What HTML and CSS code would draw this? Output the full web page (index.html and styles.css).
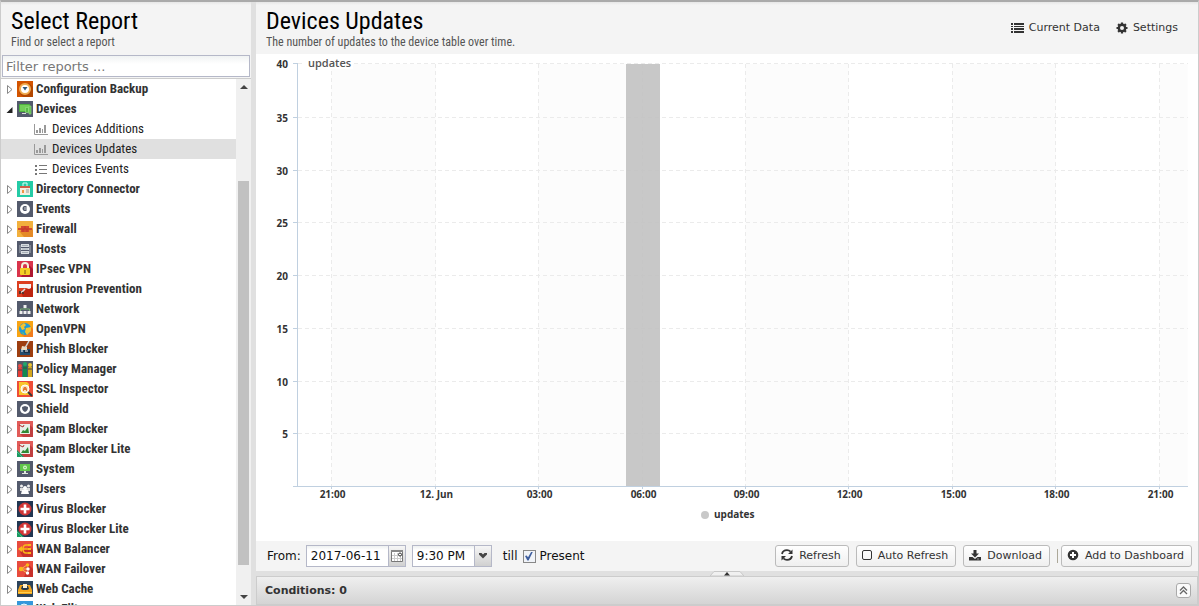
FILE: index.html
```html
<!DOCTYPE html>
<html lang="en">
<head>
<meta charset="utf-8">
<title>Reports</title>
<link rel="stylesheet" href="styles.css">
</head>
<body>
<div class="app">
  <aside class="sidebar">
    <header class="panel-head">
      <div><h1>Select Report</h1><p>Find or select a report</p></div>
    </header>
    <div class="filter"><input type="text" placeholder="Filter reports ..." aria-label="Filter reports"></div>
    <div class="tree-wrap">
      <ul class="tree" id="tree"></ul>
      <div class="scrollbar">
        <svg class="arrow" viewBox="0 0 8 4"><path d="M0 4L4 0L8 4z"/></svg>
        <div class="track"><div class="thumb"></div></div>
        <svg class="arrow" viewBox="0 0 8 4"><path d="M0 0L4 4L8 0z"/></svg>
      </div>
    </div>
  </aside>
  <div class="splitter"></div>
  <main class="main">
    <header class="panel-head">
      <div><h1>Devices Updates</h1><p>The number of updates to the device table over time.</p></div>
      <nav class="actions">
        <button type="button"><svg width="13" height="10" viewBox="0 0 13 10"><path d="M0 0h2v2H0zM3 0h10v2H3zM0 3h2v1H0zM3 3h10v1H3zM0 5h2v2H0zM3 5h10v2H3zM0 8h2v2H0zM3 8h10v2H3z"/></svg>Current Data</button>
        <button type="button"><svg width="12" height="12" viewBox="0 0 12 12"><circle cx="6" cy="6" r="3.200" fill="none" stroke="#333" stroke-width="2.400"/><path d="M6 .5v2M6 9.500v2M.5 6h2M9.500 6h2M2.100 2.100l1.400 1.400M8.500 8.500l1.400 1.400M9.900 2.100L8.500 3.500M3.500 8.500L2.100 9.900" stroke="#333" stroke-width="2.200"/></svg>Settings</button>
      </nav>
    </header>
    <svg class="chart" id="chart" viewBox="256 54 942 487" role="img" aria-label="Updates over time"></svg>
    <form class="toolbar">
      <label for="date">From:</label>
      <span class="field date"><input id="date" type="text" value="2017-06-11"><button type="button" aria-label="Pick date"><svg width="14" height="14" viewBox="0 0 14 14"><path d="M1.500 2.500h11v10h-11z" fill="#fff" stroke="#777"/><path d="M1 1h12v2H1z" fill="#888"/><path d="M4.500 4v8M7.500 4v8M10.500 4v8M2 6.500h10M2 9.500h10" stroke="#ccc" fill="none"/><circle cx="10" cy="5.500" r="1.500" fill="#fff" stroke="#333"/></svg></button></span>
      <span class="field time"><select aria-label="Start time"><option>9:30 PM</option></select><span class="trigger"><svg width="10" height="6" viewBox="0 0 10 6"><path d="M1 0h2.500L5 1.500 6.500 0H9v1.500L5 5.500 1 1.500z" fill="#444"/></svg></span></span>
      <span class="till">till</span>
      <label class="present"><input type="checkbox" checked>Present</label>
      <span class="buttons">
        <button type="button" class="btn"><svg width="12" height="12" viewBox="0 0 12 12"><path d="M1 5C1.500 2.500 3.500 1.200 6 1.200c1.500 0 2.600.5 3.600 1.400M11 7c-.5 2.500-2.500 3.800-5 3.800-1.500 0-2.600-.5-3.600-1.400" fill="none" stroke="#333" stroke-width="1.800"/><path d="M11.500.5V5H7zM.5 11.500V7H5z"/></svg>Refresh</button>
        <button type="button" class="btn"><svg width="10" height="10" viewBox="0 0 10 10"><rect x=".5" y=".5" width="9" height="9" rx="1.500" fill="none" stroke="#333"/></svg>Auto Refresh</button>
        <button type="button" class="btn"><svg width="12" height="12" viewBox="0 0 12 12"><path fill-rule="evenodd" d="M4.500 1h3v3.500H10L6 8.500 2 4.500h2.500zM0 8h3.500L6 10l2.500-2H12v3.500H0zM8.500 9.500v1h1v-1z"/></svg>Download</button>
        <span class="sep"></span>
        <button type="button" class="btn"><svg width="12" height="12" viewBox="0 0 12 12"><circle cx="6" cy="6" r="5.300"/><path d="M6 3v6M3 6h6" stroke="#fff" stroke-width="2"/></svg>Add to Dashboard</button>
      </span>
    </form>
    <div class="hsplit"><svg width="34" height="5" viewBox="0 0 34 5"><path d="M0 5L4 .5h26L34 5z" fill="#f0f0f0" stroke="#c8c8c8"/><path d="M14 4.500L17 1l3 3.500z" fill="#333"/></svg></div>
    <section class="conditions"><h2>Conditions: 0</h2>
      <button type="button" aria-label="Expand"><svg width="9" height="9" viewBox="0 0 9 9"><path d="M1 4.500L4.500 1 8 4.500M1 8l3.500-3.500L8 8" fill="none" stroke="#666" stroke-width="1.300"/></svg></button>
    </section>
  </main>
</div>
<script src="app.js"></script>
</body>
</html>
```

FILE: styles.css
```css
* { box-sizing: border-box; }
body { margin: 0; font-family: "DejaVu Sans", sans-serif; font-size: 13px; color: #111; }
button, input, select { font: inherit; color: inherit; margin: 0; }
.app { display: flex; height: 100vh; border: 1px solid #ccc; border-top: 1px solid #aaa; background: #fff; overflow: hidden; }
.sidebar { display: flex; flex-direction: column; width: 250px; flex: none; }
.splitter { width: 5px; flex: none; background: #e0e0e0; border-top: 1px solid #aaa; }
.main { display: flex; flex-direction: column; flex: 1; min-width: 0; }
.panel-head { display: flex; justify-content: space-between; align-items: center; height: 53px; flex: none; padding: 0 10px; background: linear-gradient(#aaa 1px, #e6e6e6 1px, #f4f4f4 4px); font-family: "Roboto Condensed", "Liberation Sans Narrow", Roboto, sans-serif; }
.panel-head h1 { margin: 0; font-size: 24px; line-height: 29px; font-weight: 400; color: #000; white-space: nowrap; }
.panel-head p { margin: 0; font-size: 12px; line-height: 13px; color: #555; white-space: nowrap; }
.actions { display: flex; gap: 16px; padding-right: 10px; }
.actions button { display: flex; align-items: center; gap: 5px; padding: 0; border: 0; background: none; font: 11px "DejaVu Sans", sans-serif; color: #333; }
.actions svg, .btn svg { fill: #333; flex: none; }
.filter { padding: 1px; background: #f4f4f4; border-bottom: 1px solid #ccc; flex: none; }
.filter input { display: block; width: 100%; height: 22px; padding: 0 3px; border: 1px solid #b5b8c8; background: linear-gradient(#f0f3f3, #fff 8px); outline: 0; }
.filter input::placeholder { color: #777; opacity: 1; }
.tree-wrap { display: flex; flex: 1; min-height: 0; }
.tree { flex: 1; margin: 0; padding: 0; list-style: none; overflow: hidden; font: 700 13px/20px "Roboto Condensed", "Liberation Sans Narrow", Roboto, sans-serif; color: #333; }
.tree li { display: flex; align-items: center; height: 20px; padding-left: 5px; white-space: nowrap; }
.tree .twist { width: 7px; height: 9px; margin-right: 4px; }
.tree .app-icon { width: 16px; height: 16px; margin-right: 3px; }
.tree .leaf { padding-left: 33px; font-weight: 400; color: #222; }
.tree .leaf svg { width: 14px; height: 11px; margin-right: 4px; }
.tree .selected { background: #e0e0e0; }
.scrollbar { display: flex; flex-direction: column; align-items: center; width: 15px; padding: 6px 2px; background: #f0f0f0; }
.scrollbar .arrow { width: 8px; height: 4px; fill: #444; }
.track { flex: 1; width: 100%; padding: 92px 0 30px; }
.thumb { height: 100%; background: #c1c1c1; }
.chart { display: block; flex: 1; min-height: 0; width: 100%; font: 700 10px "Open Sans", sans-serif; fill: #333; }
.chart .title { font-size: 11px; font-weight: 600; fill: #555; }
.toolbar { display: flex; align-items: center; height: 30px; flex: none; padding: 0 6px 0 11px; background: #f4f4f4; font-size: 12px; white-space: nowrap; }
.field { display: flex; height: 22px; border: 1px solid #b5b8c8; background: #fff; }
.date { width: 100px; margin-left: 5px; }
.time { position: relative; width: 80px; margin-left: 6px; }
.field input, .field select { flex: 1; min-width: 0; padding: 0 4px; border: 0; outline: 0; appearance: none; background: linear-gradient(#eef1f1, #fff 4px); color: #111; }
.time select { padding-right: 17px; }
.field button, .trigger { display: flex; align-items: center; justify-content: center; width: 17px; flex: none; padding: 0; border: 0; border-left: 1px solid #b5b8c8; background: linear-gradient(#f6f6f6, #d0d0d0); }
.trigger { position: absolute; top: 0; right: 0; bottom: 0; pointer-events: none; }
.till { margin: 0 5px 0 11px; }
.present { display: flex; align-items: center; gap: 4px; }
.present input { appearance: none; width: 13px; height: 13px; border: 1px solid #888; background: #f0f3f8; display: flex; align-items: center; justify-content: center; }
.present input:checked::before { content: ""; width: 8px; height: 9px; background: #3f5f9f; clip-path: polygon(0 50%, 20% 45%, 38% 65%, 80% 0, 100% 0, 45% 100%, 30% 100%); }
.buttons { display: flex; align-items: center; gap: 7px; margin-left: auto; }
.btn { display: flex; align-items: center; gap: 6px; height: 22px; padding: 0 7px 2px 5px; border: 1px solid #bbb; border-radius: 3px; background: linear-gradient(#fff, #efefef); font-size: 11px; color: #333; }
.sep { width: 1px; height: 14px; margin-right: -4px; background: #aca899; }
.hsplit { display: flex; justify-content: center; align-items: end; height: 5px; flex: none; background: #e0e0e0; }
.hsplit svg { display: block; }
.conditions { display: flex; align-items: center; justify-content: space-between; height: 29px; flex: none; padding: 0 6px 0 8px; border: 1px solid #ccc; background: linear-gradient(#efefef, #d4d4d4); }
.conditions h2 { margin: 0; font-size: 11px; line-height: 16px; color: #333; }
.conditions button { display: flex; align-items: center; justify-content: center; width: 15px; height: 15px; padding: 0; border: 1px solid #aaa; border-radius: 3px; background: #fafafa; }
```

FILE: app.js
```js
const box = (color, art) => `<rect width="16" height="16" fill="${color}"/>${art}`;
const slate = '#535a6c';
const ribbon = '<path d="M0 9l7 7H0z" fill="#199a62"/><path d="M0 11l5 5" stroke="#6fd3a4" stroke-dasharray="1 1"/>';
const spam = '<path d="M13 4l3 3v9H6l-3-3z" fill="#c03f3f"/><path d="M3 3h10v10H3z" fill="#e9efe9"/><path d="M4 12l2-3 2 1 3-4 1 6z" fill="#2f8a35"/><path d="M2 4l4 2 1-2" stroke="#a33" fill="none"/>';
const virus = '<circle cx="8" cy="8" r="6.500" fill="#cf3535"/><path d="M8 3.500v9M3.500 8h9" stroke="#fff" stroke-width="2.600"/>';
const icons = {
  backup: box('#d35400', '<path d="M12 2l4 4v10H6l-4-4z" fill="#b34700"/><circle cx="8" cy="8" r="5" fill="#fff" stroke="#f0ad52" stroke-width="2"/><path d="M5.500 6h5L8 9.500z" fill="#31597b"/>'),
  devices: box(slate, '<path d="M2.500 3.500h10v7h-10z" fill="#72cf58" stroke="#4caf3d"/><path d="M5 12h4v1H5z" fill="#ddd"/><path d="M8.500 6.500h3v5h-3zM12 5h2v8h-2z" fill="#58b947" stroke="#9be587" stroke-width=".6"/>'),
  directory: box('#24cba6', '<path d="M3 5h10v9H3z" fill="#f4eddf"/><path d="M3 5h10v2H3z" fill="#cf5f48"/><path d="M6 5V2h4v3" stroke="#d9fff5" fill="none"/><path d="M5 9h2v3H5z" fill="#ef9545"/><path d="M9 9h3M9 11h3" stroke="#999"/>'),
  events: box(slate, '<circle cx="8" cy="8" r="5" fill="#fff"/><path d="M7 5h2.500v5H7C5 9 5 6 7 5z" fill="#535a6c"/><path d="M8 6v3" stroke="#cdd0d6"/>'),
  firewall: box('#f2b03d', '<path d="M15 7l1 2v7H7l-5-6z" fill="#e48a27"/><path d="M1 7h3V5h8v2h3v2h-3v2H4V9H1z" fill="#d34a31"/><path d="M4 8h8M8 5v3M6 8v3M10 8v3" stroke="#b93527" stroke-width=".7"/>'),
  hosts: box(slate, '<path d="M4 3h8v3H4zM4 7h8v2H4zM4 10h8v3H4z" fill="#d8dde0"/><path d="M3 4v8M13 4v8" stroke="#aab0b8"/><path d="M5 4.500h6M5 8h6M5 11.500h6" stroke="#929ba3" stroke-width=".7"/>'),
  ipsec: box('#d9344b', '<path d="M12 4l4 4v8H4z" fill="#ad1730"/><path d="M5 8V5a3 3 0 0 1 6 0v3" stroke="#f4f1dc" stroke-width="2" fill="none"/><rect x="3" y="7" width="10" height="7" rx="1" fill="#f5ce25"/><path d="M8 9v4" stroke="#a67b17" stroke-width="1.500"/>'),
  intrusion: box('#dc3e20', '<path d="M14 5l2 2v9H6l-2-5z" fill="#bd240f"/><path d="M2 3h12v4l-2 1-3-1H2z" fill="#f4f4f4"/><path d="M8 8L5 11H3" stroke="#ddd" stroke-width="1.500" fill="none"/><path d="M2 10h2v3H2zM5 11h2v2H5z" fill="#58332c"/>'),
  network: box(slate, '<path d="M8 5v3M3.500 11V8h9v3" stroke="#76ad72" fill="none"/><path d="M6.500 4h3v3h-3zM2.500 10h3v3h-3zM6.500 10h3v3h-3zM10.500 10h3v3h-3z" fill="#eee"/>'),
  openvpn: box('#f7a414', '<path d="M12 4l4 4v8H7l-4-4z" fill="#f27c1c"/><circle cx="8" cy="8" r="6" fill="#1f9bd4"/><path d="M3 5l4-3 2 2-2 2 1 2-3 1zM9 7l5-1v4l-4 4-2-3z" fill="#f3c431"/><path d="M4 11l3 1v2z" fill="#6ac46a"/>'),
  phish: box('#9d3e10', '<path d="M3 8h10v6H3z" fill="#224c6e"/><path d="M4 9l1-4 5 1v3z" fill="#eadcc1"/><path d="M8 7l4-7" stroke="#cfd6da" stroke-width="1.500"/><path d="M7 9h6v3H7z" fill="#173047"/><path d="M4 10h2M8 10h3" stroke="#fff"/>'),
  policy: box('#555b68', '<circle cx="3" cy="5" r="2" fill="#ef4b43"/><path d="M1 7h4v9H1z" fill="#e43d35"/><circle cx="8" cy="3" r="2" fill="#20a86a"/><path d="M6 5h4v11H6z" fill="#128a51"/><circle cx="13" cy="4" r="2" fill="#edc330"/><path d="M11 6h4v10h-4z" fill="#d5a71d"/><path d="M1 9h4M6 7h4M11 8h4" stroke="#444"/>'),
  ssl: box('#ee4d37', '<path d="M2 1h8l2 2v11H2z" fill="#f9c52c"/><circle cx="8" cy="8" r="4" fill="#f8e6bd" stroke="#fff"/><path d="M6 10V8l1-2h2l1 2v2H9V9H7v1z" fill="#e57736"/><path d="M11 11l4 4" stroke="#363636" stroke-width="2"/>'),
  shield: box(slate, '<circle cx="8" cy="8" r="5" fill="#fff"/><path d="M5 6l3-1 3 1c0 3-1 4-3 5-2-1-3-2-3-5z" fill="#535a6c"/>'),
  spam: box('#e15b58', spam),
  spamlite: box('#e15b58', spam + ribbon),
  system: box(slate, '<path d="M3 3h10v7H3z" fill="#60c64a"/><path d="M7 10h2v2h2v1H5v-1h2z" fill="#e0e6df"/><circle cx="8" cy="6.500" r="2" fill="#d6f5cc"/><circle cx="8" cy="6.500" r=".8" fill="#60c64a"/>'),
  users: box(slate, '<circle cx="4.500" cy="5" r="1.500" fill="#eee"/><circle cx="11.500" cy="5" r="1.500" fill="#eee"/><path d="M3 7h10v3H3z" fill="#ddd"/><circle cx="8" cy="7" r="2" fill="#fff"/><path d="M5 9h6l1 4H4z" fill="#fff"/>'),
  virus: box('#213652', virus),
  viruslite: box('#213652', virus + ribbon),
  balancer: box('#e84b3d', '<path d="M12 6l4 3v7H6l-3-5z" fill="#c7302a"/><path d="M2 8h10M13 4H9Q6 4 6 8t3 4h4" stroke="#f9b91a" stroke-width="1.500" fill="none"/><path d="M11 3h3v2h-3zM11 7h3v2h-3zM11 11h3v2h-3z" fill="#f9b91a"/><path d="M1 8l4-3v6z" fill="#f9b91a"/>'),
  failover: box('#e84b3d', '<path d="M12 4l4 4v8H7z" fill="#c7302a"/><path d="M4 8l6-4M4 8h7M4 8l6 4" stroke="#f5c34b" fill="none"/><circle cx="4" cy="8" r="2.200" fill="#f9b91a"/><circle cx="10.500" cy="4" r="1.700" fill="#f9b91a"/><circle cx="11" cy="8" r="1.700" fill="#fff"/><circle cx="10.500" cy="12" r="1.700" fill="#fff"/>'),
  cache: box('#2c435b', '<path d="M1 9l2-5h10l2 5v4H1z" fill="#f2a31b"/><path d="M4 8l1-3h6l1 3-2 1H6z" fill="#24384c"/><path d="M6 3h4v4H6z" fill="#fff1d0"/><path d="M1 11.500h14" stroke="#ffcf4c"/>'),
  filter: box('#3498db', '<circle cx="7" cy="7" r="4" fill="#9bd0ef" stroke="#e9f7ff"/>')
};

const rows = [
  ['backup', 'Configuration Backup'], ['devices', 'Devices'],
  ['bars', 'Devices Additions'], ['bars', 'Devices Updates'], ['list', 'Devices Events'],
  ['directory', 'Directory Connector'], ['events', 'Events'], ['firewall', 'Firewall'],
  ['hosts', 'Hosts'], ['ipsec', 'IPsec VPN'], ['intrusion', 'Intrusion Prevention'],
  ['network', 'Network'], ['openvpn', 'OpenVPN'], ['phish', 'Phish Blocker'],
  ['policy', 'Policy Manager'], ['ssl', 'SSL Inspector'], ['shield', 'Shield'],
  ['spam', 'Spam Blocker'], ['spamlite', 'Spam Blocker Lite'], ['system', 'System'],
  ['users', 'Users'], ['virus', 'Virus Blocker'], ['viruslite', 'Virus Blocker Lite'],
  ['balancer', 'WAN Balancer'], ['failover', 'WAN Failover'], ['cache', 'Web Cache'], ['filter', 'Web Filter']
];
const leafArt = {
  bars: '<path d="M.5 0v10.500H14" fill="none" stroke="#999"/><path d="M2 6h2v3H2zM5 4h2v5H5zM8 5h1v4H8zM10 1h2v8h-2z" fill="#999"/>',
  list: '<path d="M1 1h2v2H1zM1 5h2v2H1zM1 9h2v2H1zM5 1h8v1H5zM5 5h8v1H5zM5 9h8v1H5z" fill="#777"/>'
};
document.getElementById('tree').innerHTML = rows.map(([icon, label]) => {
  if (leafArt[icon]) {
    const selected = label === 'Devices Updates' ? ' selected' : '';
    return `<li class="leaf${selected}"><svg viewBox="0 0 14 11">${leafArt[icon]}</svg>${label}</li>`;
  }
  const twist = icon === 'devices'
    ? '<path d="M6.500 2v6h-6z" fill="#222"/>'
    : '<path d="M1.500 .5v8l4.500-4z" fill="#fff" stroke="#888"/>';
  return `<li><svg class="twist" viewBox="0 0 7 9">${twist}</svg><svg class="app-icon" viewBox="0 0 16 16">${icons[icon]}</svg>${label}</li>`;
}).join('');

const xs = [331.5, 435.5, 538.5, 642.5, 745.5, 848.5, 952.5, 1055.5, 1159.5];
const hours = ['21:00', '12. Jun', '03:00', '06:00', '09:00', '12:00', '15:00', '18:00', '21:00'];
const ys = [63.5, 117.5, 170.5, 222.5, 275.5, 328.5, 381.5, 433.5];
let art = '';
for (let i = 0; i < xs.length; i += 2) {
  art += `<rect x="${xs[i]}" y="64" width="${(xs[i + 1] || 1187.5) - xs[i]}" height="422" fill="#fcfcfc"/>`;
}
ys.forEach((y, i) => {
  art += `<path d="M298 ${y}H1188" stroke="#ebebeb" stroke-dasharray="4 3"/><path d="M293 ${y}h5" stroke="#c0d0e0"/>`;
  art += `<text x="288" y="${y + 4}" text-anchor="end">${40 - i * 5}</text>`;
});
xs.forEach((x, i) => {
  art += `<path d="M${x} 64V486" stroke="#ebebeb" stroke-dasharray="4 3"/><path d="M${x} 486v3" stroke="#c0d0e0"/>`;
  art += `<text x="${x + 1}" y="498" text-anchor="middle">${hours[i]}</text>`;
});
art += '<rect x="626" y="64" width="34" height="422" fill="#c2c2c2" fill-opacity=".9"/>';
art += '<path d="M297.5 63V486M293 486.5H1188" stroke="#c0d0e0" fill="none"/>';
art += '<rect x="304" y="58" width="49" height="11" fill="#fff"/><text class="title" x="308" y="67">updates</text>';
art += '<circle cx="705" cy="515" r="4" fill="#c8c8c8"/><text x="714" y="518">updates</text>';
document.getElementById('chart').innerHTML = art;
```
